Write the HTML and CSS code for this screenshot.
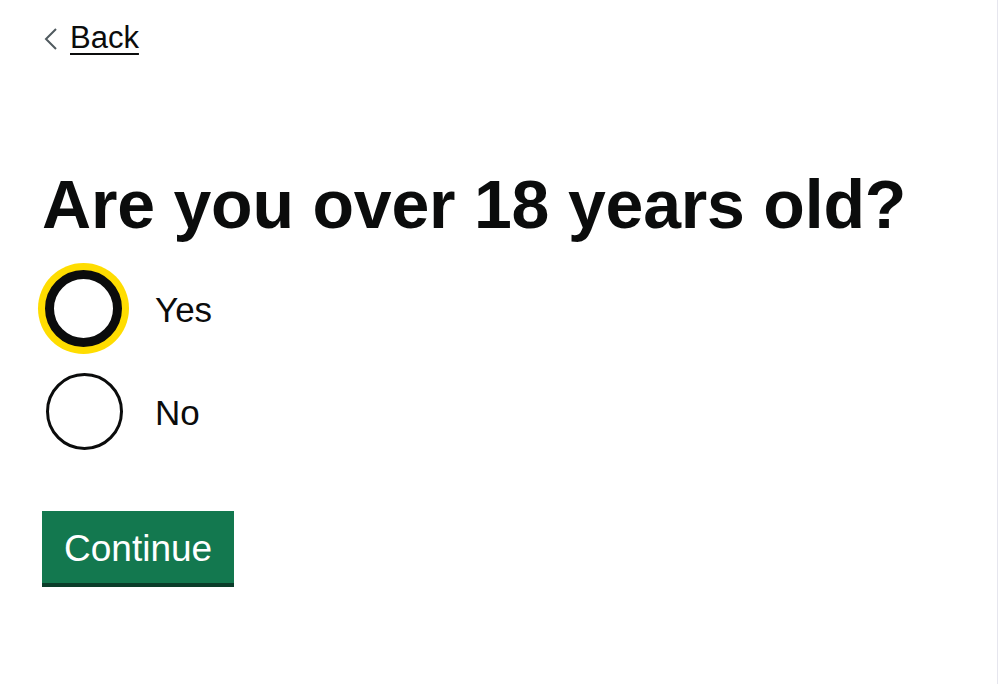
FILE: index.html
```html
<!DOCTYPE html>
<html lang="en">
<head>
<meta charset="utf-8">
<title>Are you over 18 years old?</title>
<link rel="stylesheet" href="styles.css">
</head>
<body>
<div class="page">
  <a class="back-link" href="#">
    <svg class="back-chevron" width="14" height="22" viewBox="0 0 14 22" aria-hidden="true"><path d="M12 1 L2 11 L12 21" fill="none" stroke="#505a5f" stroke-width="2"/></svg>
    <span class="back-text">Back</span>
  </a>
  <form class="form">
    <h1 class="heading">Are you over 18 years old?</h1>
    <div class="radios">
      <label class="radio">
        <span class="radio-circle radio-circle--focus"></span>
        <span class="radio-label">Yes</span>
      </label>
      <label class="radio">
        <span class="radio-circle"></span>
        <span class="radio-label">No</span>
      </label>
    </div>
    <button type="button" class="button">Continue</button>
  </form>
</div>
</body>
</html>
```

FILE: styles.css
```css
* { box-sizing: border-box; }
html, body { margin: 0; padding: 0; background: #fff; }
body {
  font-family: "Liberation Sans", Arial, Helvetica, sans-serif;
  color: #0b0c0c;
}
.page {
  width: 998px;
  height: 684px;
  padding: 18px 0 0 42px;
  border-right: 1px solid #e6e6ee;
}
.back-link {
  display: inline-flex;
  align-items: center;
  height: 40px;
  color: #0b0c0c;
  text-decoration: none;
  font-size: 31px;
  line-height: 40px;
}
.back-chevron {
  margin-left: 2px;
  margin-right: 12px;
  margin-top: 2px;
}
.back-text {
  text-decoration: underline;
  text-decoration-thickness: 2px;
  text-underline-offset: 5px;
}
.form {
  display: flex;
  flex-direction: column;
  align-items: flex-start;
}
.heading {
  margin: 112px 0 0 0;
  font-size: 68px;
  line-height: 68px;
  font-weight: 700;
  letter-spacing: -0.2px;
}
.radios {
  display: flex;
  flex-direction: column;
  gap: 11px;
  margin-top: 24px;
}
.radio {
  display: flex;
  align-items: center;
  height: 92px;
  padding-left: 4px;
}
.radio-circle {
  width: 77px;
  height: 77px;
  border: 3px solid #0b0c0c;
  border-radius: 50%;
  background: #fff;
  flex: none;
}
.radio-circle--focus {
  border-width: 9px;
  box-shadow: 0 0 0 7px #ffdd00;
  margin-left: -1px;
  margin-right: 1px;
}
.radio-label {
  margin-left: 32px;
  padding-top: 4px;
  font-size: 35px;
  line-height: 40px;
}
.button {
  margin-top: 54px;
  height: 72px;
  padding: 4px 22px 0;
  border: 0;
  border-radius: 0;
  background: #13784f;
  box-shadow: 0 4px 0 #0b3d2a;
  color: #fff;
  font-family: "Liberation Sans", Arial, Helvetica, sans-serif;
  font-size: 37px;
  line-height: 64px;
}
```
